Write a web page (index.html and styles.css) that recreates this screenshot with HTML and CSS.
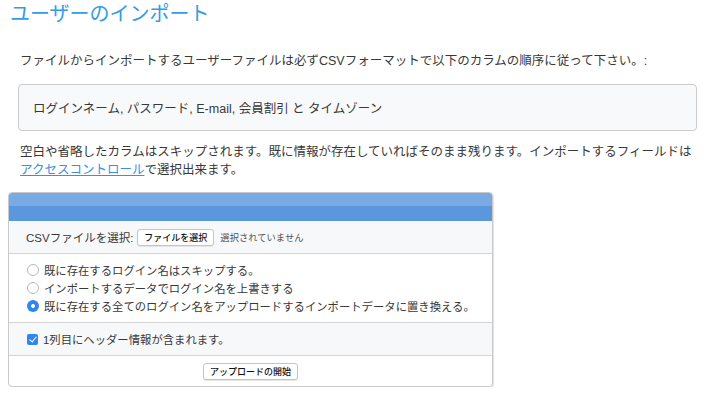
FILE: index.html
```html
<!DOCTYPE html>
<html lang="ja">
<head>
<meta charset="utf-8">
<title>ユーザーのインポート</title>
<link rel="stylesheet" href="styles.css">
</head>
<body>
<h1 class="title">ユーザーのインポート</h1>
<p class="text first">ファイルからインポートするユーザーファイルは必ずCSVフォーマットで以下のカラムの順序に従って下さい。:</p>
<div class="columns">ログインネーム, パスワード, E-mail, 会員割引 と タイムゾーン</div>
<p class="text second">空白や省略したカラムはスキップされます。既に情報が存在していればそのまま残ります。インポートするフィールドは<a href="#" class="link">アクセスコントロール</a>で選択出来ます。</p>
<form class="panel">
  <div class="panel-head"></div>
  <div class="row row-gray row-file">
    <span class="label">CSVファイルを選択:</span>
    <span class="btn">ファイルを選択</span>
    <span class="nofile">選択されていません</span>
  </div>
  <div class="row row-radios">
    <label class="opt"><input type="radio" name="mode" class="radio"><span>既に存在するログイン名はスキップする。</span></label>
    <label class="opt"><input type="radio" name="mode" class="radio"><span>インポートするデータでログイン名を上書きする</span></label>
    <label class="opt"><input type="radio" name="mode" class="radio" checked><span>既に存在する全てのログイン名をアップロードするインポートデータに置き換える。</span></label>
  </div>
  <div class="row row-gray row-check">
    <label class="opt"><input type="checkbox" class="check" checked><span>1列目にヘッダー情報が含まれます。</span></label>
  </div>
  <div class="row row-submit">
    <span class="btn">アップロードの開始</span>
  </div>
</form>
</body>
</html>
```
FILE: styles.css
```css
html, body {
  margin: 0;
  padding: 0;
  background: #ffffff;
}
body {
  padding: 0 7px 0 8px;
  font-family: "Liberation Sans", "Noto Sans CJK JP", sans-serif;
  color: #383838;
}
.title {
  margin: 0;
  padding-left: 2px;
  font-size: 20px;
  line-height: 28px;
  font-weight: normal;
  color: #349ce4;
}
.text {
  margin: 0;
  padding-left: 12px;
  font-size: 12.5px;
  line-height: 18px;
}
.first {
  margin-top: 24px;
}
.columns {
  margin: 14px 0 0 10px;
  height: 45px;
  border: 1px solid #cccccc;
  border-radius: 4px;
  background: #f8f9fa;
  padding-left: 14px;
  display: flex;
  align-items: center;
  font-size: 12.5px;
}
.second {
  margin-top: 12px;
}
.link {
  color: #3b8ee4;
  text-decoration: underline;
}
.panel {
  margin: 13px 0 0 0;
  width: 483px;
  border: 1px solid #c9c9c9;
  border-radius: 4px;
  overflow: hidden;
  box-shadow: 1px 1px 0 #e4e4e4;
  font-size: 11.35px;
}
.panel-head {
  height: 27px;
  background: linear-gradient(#7aaae3 0, #7aaae3 13px, #5b97dc 13px, #5b97dc 100%);
  border-bottom: 1px solid #5b97dc;
}
.row {
  border-bottom: 1px solid #d4d4d4;
}
.row:last-child {
  border-bottom: 0;
}
.row-gray {
  background: #f7f8fa;
}
.row-file {
  height: 32px;
  display: flex;
  align-items: center;
  padding-left: 17px;
}
.label {
  font-size: 11.5px;
}
.btn {
  display: inline-flex;
  align-items: center;
  justify-content: center;
  height: 15px;
  padding: 0 6px;
  border: 1px solid #c4c4c4;
  border-radius: 3px;
  background: #ffffff;
  font-size: 9px;
  font-weight: 500;
  color: #111;
  box-shadow: 0 1px 0 #e6e6e6;
}
.row-file .btn {
  margin-left: 4px;
}
.nofile {
  margin-left: 6px;
  font-size: 9.3px;
  color: #555;
}
.row-radios {
  padding: 7px 0 7px 18px;
}
.opt {
  display: flex;
  align-items: center;
  height: 18px;
  font-size: 11.35px;
}
.opt span {
  margin-left: 5px;
}
.radio {
  appearance: none;
  -webkit-appearance: none;
  margin: 0;
  width: 12px;
  height: 12px;
  border: 1px solid #b9b9b9;
  border-radius: 50%;
  background: #ffffff;
  box-sizing: border-box;
}
.radio:checked {
  border: 0;
  background: radial-gradient(circle, #ffffff 0, #ffffff 1.7px, #2f86f0 2.2px);
}
.row-check {
  height: 32px;
  display: flex;
  align-items: center;
  padding-left: 18px;
}
.check {
  appearance: none;
  -webkit-appearance: none;
  margin: 0;
  width: 11px;
  height: 11px;
  border-radius: 2px;
  background: #2f86f0;
  position: relative;
}
.check:checked::after {
  content: "";
  position: absolute;
  left: 3.5px;
  top: 1px;
  width: 3px;
  height: 6px;
  border: solid #ffffff;
  border-width: 0 1.5px 1.5px 0;
  transform: rotate(40deg);
}
.row-submit {
  height: 30px;
  display: flex;
  align-items: center;
  justify-content: center;
}
```
